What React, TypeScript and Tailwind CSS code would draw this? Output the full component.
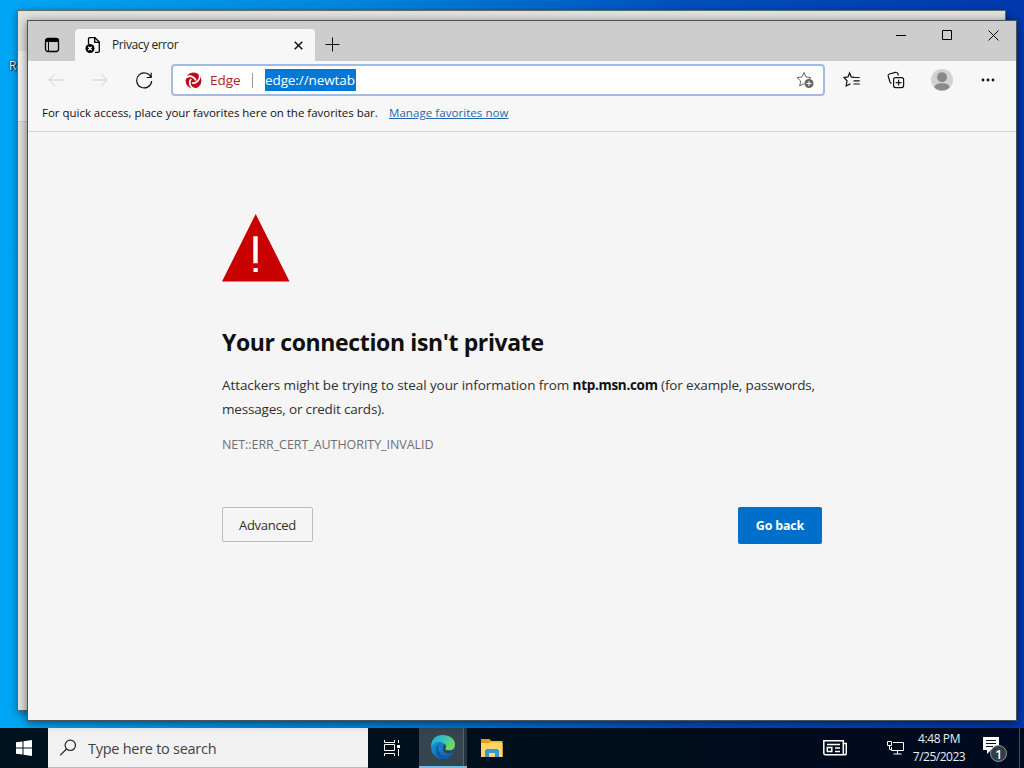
import React from "react";

const ui = "font-['Open_Sans','Noto_Sans',sans-serif] whitespace-nowrap leading-none";

function T({ className, children }: { className: string; children: React.ReactNode }) {
  return <span className={`${ui} block ${className}`}>{children}</span>;
}

const star = "M8 1.5 L10 6 L15 6.5 L11.3 10 M8 1.5 L6 6 L1 6.6 L4.7 10 L3.7 15 L8 12.5";

function TitleBar() {
  return (
    <div className="flex h-10 bg-[#cdcdcd]">
      <div className="flex w-[47px] items-center pl-4 pt-2">
        <svg width="16" height="16" viewBox="0 0 16 16" fill="none" stroke="#000">
          <rect x="1.5" y="1.5" width="13" height="13" rx="2.5" strokeWidth="1.3" />
          <path d="M1.5 3.5h13" strokeWidth="3" />
          <path d="M4.5 4v10" />
        </svg>
      </div>
      <div className="mt-2 flex w-[240px] items-center rounded-t-[4px] bg-[#f7f7f7] pl-[10px]">
        <svg width="17" height="18" viewBox="0 0 17 18" fill="none" stroke="#000" strokeWidth="1.3">
          <path d="M3.5 8V3.2Q3.5 1.7 5 1.7h5l4.3 4.3v9q0 1.3-1.3 1.3h-3M9.7 2v4.3h4.3" />
          <circle cx="5" cy="12.5" r="4.5" fill="#000" stroke="none" />
          <path d="M3.3 10.8l3.4 3.4M6.7 10.8l-3.4 3.4" stroke="#fff" />
        </svg>
        <T className="ml-[10px] w-[182px] text-[12px] tracking-[-0.4px] text-[#222]">Privacy error</T>
        <svg width="9" height="9" viewBox="0 0 9 9" stroke="#111" strokeWidth="1.5"><path d="M.7.7l7.6 7.6M8.3.7L.7 8.3" /></svg>
      </div>
      <svg className="ml-[10px] mt-4" width="15" height="15" viewBox="0 0 15 15" stroke="#111"><path d="M.5 7.5h14M7.5.5v14" /></svg>
      <div className="ml-auto flex items-start gap-9 pr-[17px] pt-[9px]">
        <svg width="10" height="11" viewBox="0 0 10 11" stroke="#000"><path d="M0 5.5h10" /></svg>
        <svg width="10" height="10" viewBox="0 0 10 10" fill="none" stroke="#000"><path d="M.5.5h9v9h-9z" /></svg>
        <svg width="11" height="11" viewBox="0 0 11 11" stroke="#000"><path d="M.5.5l10 10M10.5.5l-10 10" /></svg>
      </div>
    </div>
  );
}

function Toolbar() {
  return (
    <div className="flex h-[38px] items-center pl-5">
      <svg width="16" height="14" viewBox="0 0 16 14" fill="none" stroke="#cfcfcf"><path d="M16 7H.8M7 .8L.8 7 7 13.2" /></svg>
      <svg className="ml-7" width="16" height="14" viewBox="0 0 16 14" fill="none" stroke="#cfcfcf"><path d="M0 7h15.2M9 .8L15.2 7 9 13.2" /></svg>
      <svg className="ml-7" width="17" height="17" viewBox="0 0 17 17" fill="none" stroke="#111" strokeWidth="1.2">
        <path d="M15 5.2A7.5 7.5 0 1 0 15.7 9M15.2.8v4.7h-4.6" />
      </svg>
      <div className="ml-[18px] flex h-8 w-[654px] items-center rounded-[4px] border-2 border-[#a1bbe3] bg-white pl-[12px]">
        <svg width="17" height="17" viewBox="0 0 17 17">
          <circle cx="8.5" cy="8.5" r="8" fill="#c20a18" />
          <g fill="none" stroke="#fff" strokeWidth="1.7">
            <path d="M-.5 7Q3.5 2.5 8 5.2Q10.5 6.8 11 8.5" />
            <path d="M14.5 1.8Q15.5 7.8 11.2 10.3Q9 11.5 7 10.8" />
            <path d="M11.5 17Q5.5 16.5 4.8 11.5Q4.6 9 6 7" />
          </g>
        </svg>
        <T className="ml-2 w-[42px] pt-px text-[13.5px] text-[#b51c24]">Edge</T>
        <span className="h-[15px] w-px bg-[#999]" />
        <span className="ml-3 flex h-[22px] w-[91px] items-center bg-[#0078d7] pt-px">
          <T className="text-[13.5px] tracking-[-0.1px] text-white">edge://newtab</T>
        </span>
        <svg className="ml-auto mr-[9px]" width="18" height="18" viewBox="0 0 18 18" fill="none" stroke="#666">
          <path d={star} />
          <circle cx="13" cy="12.5" r="4.5" fill="#666" stroke="none" />
          <path d="M10.5 12.5h5M13 10v5" stroke="#fff" />
        </svg>
      </div>
      <svg className="ml-[18px]" width="18" height="18" viewBox="0 0 18 18" fill="none" stroke="#111" strokeWidth="1.2">
        <path d="M11 6.3L8.2 5.9 6.6 1.8 5 5.9 1 6.5 4 9.8 3.2 15 7.5 12.7M10 6.5h6.7M10.5 9.8h6.2M10.5 13h6.2" />
      </svg>
      <svg className="ml-[26px]" width="18" height="18" viewBox="0 0 18 18" fill="none" stroke="#111" strokeWidth="1.2">
        <rect x="6.6" y="6.6" width="10" height="10" rx="2" />
        <path d="M11.6 8.7v5.8M8.7 11.6h5.8M4.5 12.3Q3.3 12 2.8 10.5L1.2 5Q.8 3.5 2.3 3L8.5 1.3Q10.2 1 10.8 2.5L11.4 4.5" />
      </svg>
      <svg className="ml-[26px]" width="22" height="22" viewBox="0 0 22 22">
        <circle cx="11" cy="11" r="11" fill="#d2d2d0" />
        <circle cx="11" cy="8.2" r="5" fill="#8a8a88" />
        <path d="M3.3 18.2Q4 14.3 11 14.3t7.7 3.9Q15.5 21.5 11 21.5t-7.7-3.3" fill="#8a8a88" />
      </svg>
      <svg className="ml-[28px]" width="14" height="4" viewBox="0 0 14 4" fill="#111"><circle cx="2" cy="2" r="1.4" /><circle cx="7" cy="2" r="1.4" /><circle cx="12" cy="2" r="1.4" /></svg>
    </div>
  );
}

function ErrorPage() {
  return (
    <main className="flex flex-1 flex-col pl-[194px] pt-[82px]">
      <svg width="68" height="68" viewBox="0 0 68 68"><path d="M33.7 0L67.5 67.5H0z" fill="#c80000" /><path d="M31.3 22.3h4.4v27h-4.4zM31.5 54h4.2v4h-4.2z" fill="#fff" /></svg>
      <h1 className={`${ui} mt-[49px] h-6 text-[23px] tracking-[-0.37px] font-bold text-[#101010]`}>Your connection isn't private</h1>
      <div className="mt-[18px] h-[71px] text-[#303030]">
        <p className="h-6"><T className="pt-[6px] text-[13.5px] tracking-[-0.08px]">Attackers might be trying to steal your information from <b className="font-bold tracking-[-0.3px] text-[#111]">ntp.msn.com</b> <span className="tracking-[-0.15px]">(for example, passwords,</span></T></p>
        <p className="h-6"><T className="pt-[6px] text-[13.5px] tracking-[-0.18px]">messages, or credit cards).</T></p>
      </div>
      <T className="-mt-[5px] text-[12.5px] tracking-[-0.06px] text-[#707070]">NET::ERR_CERT_AUTHORITY_INVALID</T>
      <div className="mt-[55px] flex w-[600px] items-start justify-between">
        <button className="flex h-[35px] w-[91px] items-center justify-center rounded-[2px] border border-[#bcbcbc] pt-[2px]"><T className="text-[13px] tracking-[-0.3px] text-[#303030]">Advanced</T></button>
        <button className="flex h-[37px] w-[84px] items-center justify-center rounded-[2px] bg-[#006fc9] pt-[2px]"><T className="text-[12.5px] tracking-[-0.2px] font-bold text-white">Go back</T></button>
      </div>
    </main>
  );
}

function Taskbar() {
  return (
    <footer className="flex h-10 bg-[linear-gradient(90deg,#00131f,#000d1b_65%,#000a20)]">
      <div className="flex w-12 items-center justify-center">
        <svg width="16" height="16" viewBox="0 0 16 16" fill="#fff"><path d="M0 2.3L6.5 1.4V7.5H0zM7.5 1.2L16 0V7.5H7.5zM0 8.5H6.5V14.6L0 13.7zM7.5 8.5H16V16L7.5 14.8z" /></svg>
      </div>
      <div className="flex w-[320px] items-center border-b border-[#bbb] bg-[#f2f2f2] pl-[11px]">
        <svg width="18" height="18" viewBox="0 0 18 18" fill="none" stroke="#222" strokeWidth="1.2"><circle cx="11.3" cy="6.3" r="5.2" /><path d="M7.5 10L1.2 16.3" /></svg>
        <T className="ml-[11px] pt-[3px] text-[14.5px] tracking-[-0.27px] text-[#424242]">Type here to search</T>
      </div>
      <div className="flex w-[51px] items-center pl-[15px]">
        <svg width="17" height="16" viewBox="0 0 17 16" fill="none" stroke="#fff"><path d="M1.5 0v2.5h10V0M1.5 16v-2.5h10V16M1.5 4.5h10v6h-10zM15.5 0v3M15.5 9v7" /><path d="M14 5h3v3h-3z" fill="#fff" stroke="none" /></svg>
      </div>
      <div className="flex w-[48px] items-center border-b-2 border-[#76b9ed] bg-[linear-gradient(90deg,#36444f_44px,#526471_44px_45px,#263641_45px)] pl-3">
        <svg width="24" height="24" viewBox="0 0 24 24">
          <defs>
            <linearGradient id="eb" x1="0" y1="0" x2="1" y2="1"><stop stopColor="#1b9de2" /><stop offset="1" stopColor="#0b59aa" /></linearGradient>
            <linearGradient id="eg" x1="0" y1="0" x2="1" y2=".5"><stop stopColor="#22a9dc" /><stop offset=".5" stopColor="#35c1c1" /><stop offset="1" stopColor="#70dc57" /></linearGradient>
          </defs>
          <circle cx="12" cy="12" r="12" fill="url(#eb)" />
          <path d="M8 9Q5.5 14 9.5 18.5Q14 23 21.8 18.3Q18 24 12 24Q5 23 4.8 16Q4.8 10.5 8 9" fill="#1059a5" />
          <path d="M.1 11Q1 0 12 0Q24 1 24 10Q23.5 15.5 18 15.5Q13.2 15.5 14.5 13Q15.8 10.5 13.5 8.8Q7 4 .1 11" fill="url(#eg)" />
          <path d="M14.5 13Q13.2 15.5 18 15.5Q21.5 15.5 23.2 13.5L22.5 17.2Q17 20 13.2 17Q10.5 14 13.4 9Q15.8 10.5 14.5 13" fill="#36444f" />
        </svg>
      </div>
      <div className="flex w-[49px] items-center pl-[14px]">
        <svg width="22" height="18" viewBox="0 0 22 18"><path d="M0 0h8l2 2h11.5v16H0z" fill="#f4bd3e" /><path d="M0 4h21.5v14H0z" fill="#ffd667" /><path d="M0 0h8l2 2-2 2H0z" fill="#e89d18" /><path d="M4 18v-6.5L5.5 10h11l1.5 1.5V18h-4v-4H8v4z" fill="#3d95d0" /></svg>
      </div>
      <div className="ml-auto flex items-center">
        <svg width="24" height="16" viewBox="0 0 24 16" fill="none" stroke="#fff" strokeWidth="1.5"><path d="M.8.8h19.5v14H2.5Q.8 14.8.8 13zM20.3 3.5h3v9.5q0 1.8-1.5 1.8h-3M4 4.5h13M12 8h5M12 11.5h5M4.3 7.5h4.5v4H4.3z" /></svg>
        <svg className="ml-10" width="17" height="14" viewBox="0 0 17 14" fill="none" stroke="#fff"><path d="M6 1.5h10.5v8H4.5V6M10.5 9.5v3.5M6.5 13h8M.5.5h4v4h-4zM2.5 4.5v4h2" /></svg>
        <div className="ml-2 mr-px flex w-[54px] flex-col items-center gap-[6px] text-[#e8eef2]">
          <T className="text-[12px] tracking-[-0.4px]">4:48 PM</T><T className="text-[12px] tracking-[-0.5px]">7/25/2023</T>
        </div>
        <div className="relative ml-4 h-[26px] w-[24px]">
          <svg width="24" height="28" viewBox="0 0 24 28"><path d="M0 2h16v13H8l-4 4v-4H0z" fill="#fff" /><path d="M3 5.5h10M3 8.5h10M3 11.5h7" stroke="#001020" /><circle cx="15.5" cy="18.5" r="8" fill="#323b46" stroke="#939aa0" /></svg>
          <T className="absolute left-[12px] top-[13px] text-[13px] font-semibold text-white">1</T>
        </div>
        <span className="ml-[12px] mr-1 h-10 w-px bg-[#46505c]" />
      </div>
    </footer>
  );
}

export default function App() {
  return (
    <div className="relative flex h-[768px] w-[1024px] flex-col overflow-hidden bg-[linear-gradient(90deg,#00a6f5_0%,#0085dd_35%,#004fbd_67%,#0038ad_100%)]">
      <T className="absolute left-[9px] top-[60px] text-[12px] text-white [text-shadow:1px_1px_1px_#000,0_0_2px_#000]">R</T>
      <div className="absolute left-[17px] top-[10px] h-[701px] w-[989px] border border-[#596b70] bg-[#e1e1de] shadow-[0_2px_8px_#0006]">
        <div className="mt-10 h-[71px] border-b border-[#ccc] bg-[#f0f0f0]" />
      </div>
      <div className="z-10 ml-[27px] mt-5 flex h-[701px] w-[990px] flex-col border border-[#4a5457] bg-[#f5f5f5] shadow-[0_2px_9px_#0008]">
        <TitleBar />
        <div className="h-[71px] border-b border-[#d2d2d2] bg-[#f7f7f7]">
          <Toolbar />
          <div className="flex h-8 items-center pb-1 pl-[14px]">
            <T className="w-[340px] text-[11.5px] font-medium tracking-[-0.02px] text-[#111]">For quick access, place your favorites here on the favorites bar.</T>
            <T className="ml-[7px] text-[11.5px] font-medium tracking-[0.06px] text-[#216ab1] underline">Manage favorites now</T>
          </div>
        </div>
        <ErrorPage />
      </div>
      <div className="mt-[7px]"><Taskbar /></div>
    </div>
  );
}
